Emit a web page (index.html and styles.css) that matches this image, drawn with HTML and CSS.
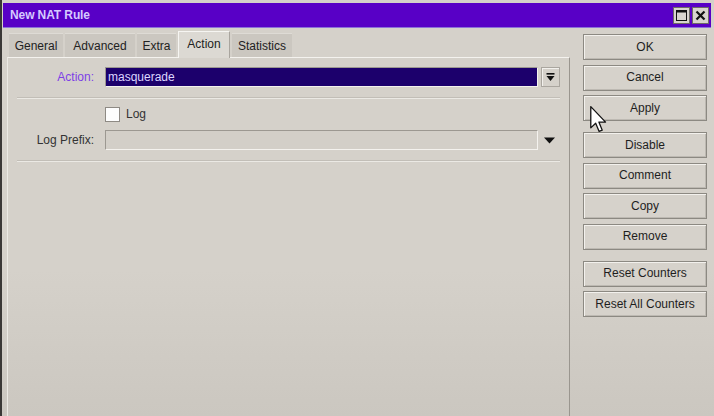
FILE: index.html
```html
<!DOCTYPE html>
<html>
<head>
<meta charset="utf-8">
<link rel="stylesheet" href="styles.css">
</head>
<body>
<div class="window">
  <div class="titlebar">
    <span class="title">New NAT Rule</span>
    <div class="tb-buttons">
      <span class="tb-btn"><svg width="11" height="11" viewBox="0 0 11 11"><rect x="0.5" y="0.5" width="10" height="10" fill="none" stroke="#111" stroke-width="1"/><rect x="0" y="0" width="11" height="2.5" fill="#111"/></svg></span>
      <span class="tb-btn"><svg width="11" height="11" viewBox="0 0 11 11"><path d="M1.5 1.5 L9.5 9.5 M9.5 1.5 L1.5 9.5" stroke="#111" stroke-width="2.2"/></svg></span>
    </div>
  </div>
  <div class="main">
    <div class="left">
      <div class="tabs">
        <span class="tab t-general">General</span>
        <span class="tab t-advanced">Advanced</span>
        <span class="tab t-extra">Extra</span>
        <span class="tab t-action active">Action</span>
        <span class="tab t-stats">Statistics</span>
      </div>
      <div class="panel">
        <div class="row row-action">
          <span class="label label-action">Action:</span>
          <span class="field field-selected">masquerade</span>
          <span class="drop-btn"><svg width="9" height="9" viewBox="0 0 9 9"><rect x="0.5" y="0" width="8" height="1.6" fill="#111"/><path d="M0.5 3 L8.5 3 L4.5 8 Z" fill="#111"/></svg></span>
        </div>
        <div class="sep"></div>
        <div class="row row-check">
          <span class="label"></span>
          <span class="checkbox"></span>
          <span class="check-label">Log</span>
        </div>
        <div class="row row-prefix">
          <span class="label">Log Prefix:</span>
          <span class="field field-disabled"></span>
          <span class="drop-arrow"><svg width="11" height="7" viewBox="0 0 11 7"><path d="M0 0.5 L11 0.5 L5.5 6.5 Z" fill="#111"/></svg></span>
        </div>
        <div class="sep"></div>
      </div>
    </div>
    <div class="right">
      <div class="group">
        <span class="btn">OK</span>
        <span class="btn">Cancel</span>
        <span class="btn">Apply</span>
      </div>
      <div class="group">
        <span class="btn">Disable</span>
        <span class="btn">Comment</span>
        <span class="btn">Copy</span>
        <span class="btn">Remove</span>
      </div>
      <div class="group">
        <span class="btn">Reset Counters</span>
        <span class="btn">Reset All Counters</span>
      </div>
    </div>
  </div>
  <svg class="cursor" width="17" height="27" viewBox="0 0 13 21"><path d="M0.5 0.5 L0.5 17 L4.3 13.4 L7 19.8 L9.4 18.8 L6.8 12.5 L12 12.5 Z" fill="#fff" stroke="#111" stroke-width="1" stroke-linejoin="round"/></svg>
</div>
</body>
</html>
```

FILE: styles.css
```css
html, body {
  margin: 0;
  padding: 0;
  width: 714px;
  height: 416px;
  overflow: hidden;
}
body {
  background: linear-gradient(#d5d1ca 0%, #d5d1ca 65%, #cbc7c0 100%);
  font-family: "Liberation Sans", Arial, sans-serif;
  font-size: 12px;
  color: #1e1e1e;
}
.window {
  position: relative;
  height: 416px;
  border-left: 2px solid #3a3836;
  box-sizing: border-box;
  display: flex;
  flex-direction: column;
}
.titlebar {
  margin: 3px 3px 0 1px;
  height: 24px;
  background: #5800c6;
  border-bottom: 1px solid #8c70d8;
  display: flex;
  align-items: center;
  padding-left: 7px;
  padding-right: 2px;
}
.title {
  flex: 1;
  color: #d6caff;
  font-weight: bold;
  font-size: 12px;
  letter-spacing: -0.1px;
}
.tb-buttons {
  display: flex;
  gap: 2px;
}
.tb-btn {
  width: 17px;
  height: 17px;
  box-sizing: border-box;
  background: #d8d4ce;
  border: 1px solid #6e6a66;
  display: flex;
  align-items: center;
  justify-content: center;
}
.main {
  flex: 1;
  display: flex;
  padding-top: 3px;
}
.left {
  width: 563px;
  margin-left: 5px;
  display: flex;
  flex-direction: column;
}
.tabs {
  display: flex;
  align-items: flex-end;
  height: 26px;
  padding-left: 2px;
  gap: 2px;
}
.tab {
  height: 24px;
  box-sizing: border-box;
  display: flex;
  align-items: center;
  justify-content: center;
  background: #cbc7c0;
  border-top: 1px solid #dedbd5;
  color: #222;
}
.t-general { width: 54px; }
.t-advanced { width: 70px; }
.t-extra { width: 39px; }
.t-action { width: 52px; }
.t-stats { width: 60px; }
.tab.active {
  height: 27px;
  margin-bottom: -1px;
  background: #dcd9d3;
  border-top: 1px solid #f6f5f2;
  border-left: 1px solid #f6f5f2;
  border-right: 1px solid #a9a59e;
  padding-bottom: 2px;
  position: relative;
}
.panel {
  flex: 1;
  border-top: 1px solid #f4f2ee;
  border-left: 1px solid #ebe9e4;
  border-right: 1px solid #9a968f;
  padding-top: 9px;
}
.row {
  display: flex;
  align-items: center;
}
.label {
  width: 86px;
  margin-right: 11px;
  text-align: right;
  color: #333;
  flex: none;
}
.label-action {
  color: #7d3fe6;
}
.field {
  width: 433px;
  height: 20px;
  box-sizing: border-box;
  border-top: 1px solid #9c9891;
  border-left: 1px solid #9c9891;
  border-bottom: 1px solid #f4f2ee;
  border-right: 1px solid #f4f2ee;
  display: flex;
  align-items: center;
  padding-left: 2px;
  flex: none;
}
.field-selected {
  background: #1c006c;
  color: #dcd6ff;
}
.field-disabled {
  background: #d3cfc8;
}
.drop-btn {
  margin-left: 3px;
  width: 19px;
  height: 20px;
  box-sizing: border-box;
  border: 1px solid #aaa69f;
  box-shadow: inset 1px 1px 0 #f2f0ec;
  display: flex;
  align-items: center;
  justify-content: center;
}
.drop-arrow {
  margin-left: 6px;
  display: flex;
  align-items: center;
}
.sep {
  margin: 10px 0 0 9px;
  width: 543px;
  height: 0;
  border-top: 1px solid #c2beb7;
  border-bottom: 1px solid #ebe9e4;
}
.row-check {
  margin-top: 7px;
  height: 16px;
}
.checkbox {
  width: 15px;
  height: 15px;
  box-sizing: border-box;
  background: #fdfdfd;
  border: 1px solid #8e8a84;
  flex: none;
}
.check-label {
  margin-left: 6px;
  color: #333;
}
.row-prefix {
  margin-top: 8px;
}
.right {
  margin-left: 13px;
  width: 124px;
  padding-top: 3px;
  display: flex;
  flex-direction: column;
}
.group {
  display: flex;
  flex-direction: column;
  gap: 4.5px;
}
.group + .group {
  margin-top: 11px;
}
.btn {
  height: 26px;
  box-sizing: border-box;
  border: 1px solid #8c8982;
  box-shadow: inset 1px 1px 0 #f3f1ed, inset -1px -1px 0 #bdb9b2;
  background: #d6d2cb;
  display: flex;
  align-items: center;
  justify-content: center;
  color: #1e1e1e;
  padding-bottom: 1px;
}
.cursor {
  position: absolute;
  left: 588px;
  top: 106px;
}
```
